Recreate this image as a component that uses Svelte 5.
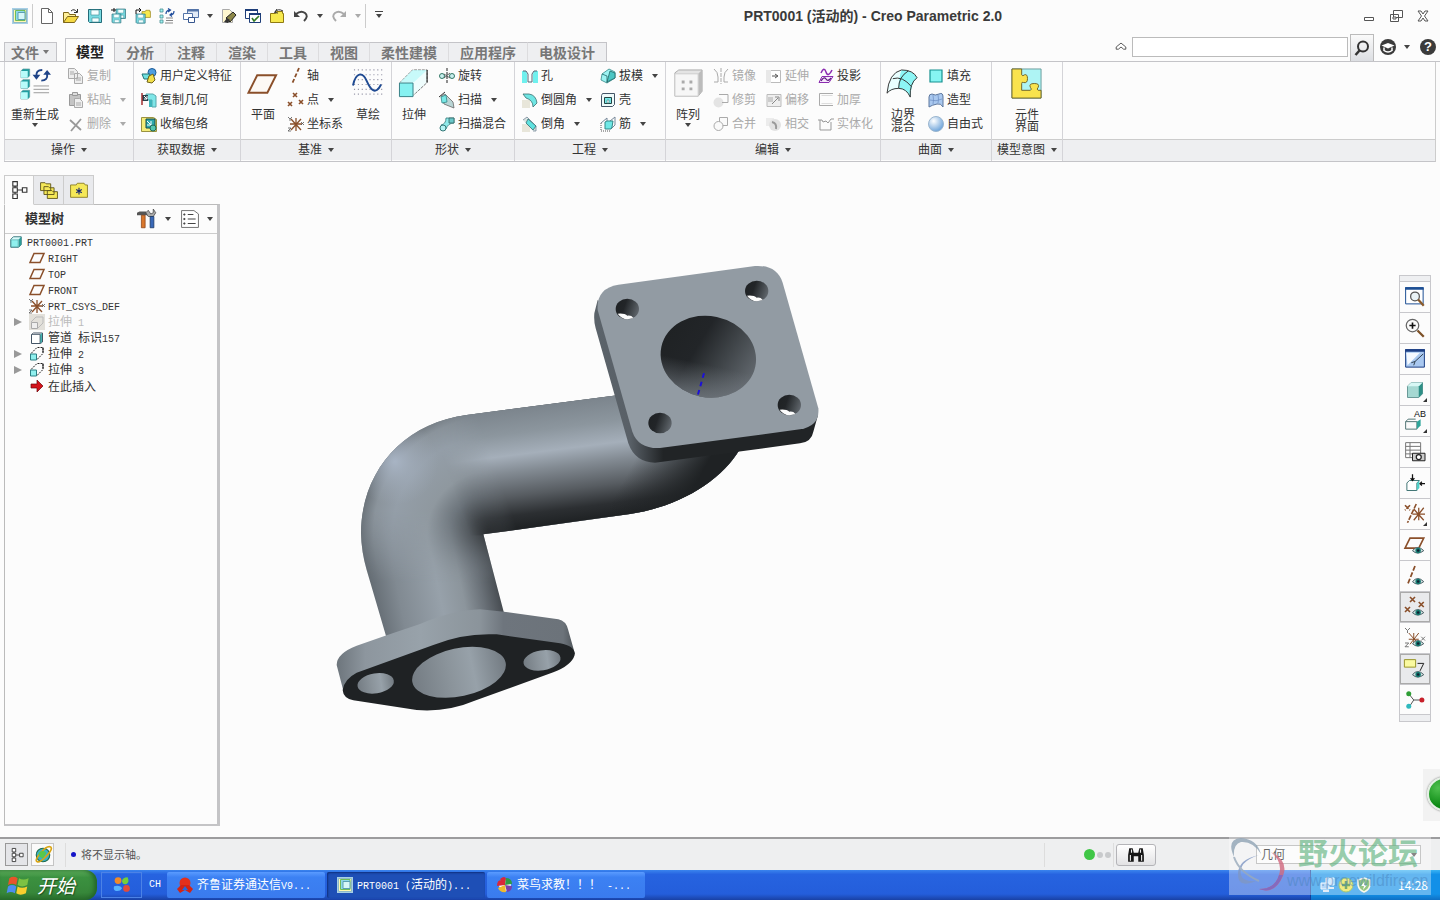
<script lang="ts">
  // Shared pieces of the icon drawings
  const eye = '<path d="M6 12.500q4-5 9 0q-5 4-9 0z" fill="#d8e6e6" stroke="#4b6066" stroke-width=".8"/><circle cx="10.500" cy="12.300" r="2.200" fill="#157a70"/><circle cx="10.500" cy="12.300" r="1" fill="#123"/>';
  const cube = '<path d="M2 5l3-3h9v9l-3 3H2z" fill="#d9fbfb" stroke="#2c6d74"/><path d="M11 5l3-3v9l-3 3z" fill="#2a9c98"/><path d="M2.500 5.500h8v8h-8z" fill="#8ff0ee" stroke="#3a8f92" stroke-width=".6"/>';
  const extrude = '<path d="M2 7.500L8 1.500h6v6L8 13.500" fill="none" stroke="#222" stroke-dasharray="2 1"/><path d="M14 1.500v5" stroke="#222"/><path d="M1.500 8h6v6h-6z" fill="#8ff0ee" stroke="#2c7f84"/>';
  const csys = '<path d="M8 2v13M2 8h12M3 3l10 11M13 3L3 14" stroke="#8a4f2a" stroke-width="1.300"/><path d="M0 1l2 2 2-2M2 3v2M0 12h3l-3 3h3M13 6l3 3M16 6l-3 3" stroke="#555" stroke-width=".8" fill="none"/>';
  const crosses = '<path d="M5 1l4 4M9 1L5 5M0 10l4 4M4 10l-4 4M11 8l4 4M15 8l-4 4" stroke="#8a4f2a" stroke-width="1.600"/>';
  const floppy = '<path d="M1.500 1.500h13v13h-12l-1-1z" fill="#79dbe2" stroke="#236b78"/><path d="M4 2h8v5H4zM5 10h7v4H5z" fill="#f4ffff" stroke="#3a8792" stroke-width=".6"/>';
  const folder = '<path d="M1.500 5.500h5l1-2h6v2h1v9h-13z" fill="#f7e94d" stroke="#8f7a12"/>';

  const icons: Record<string, string> = {
    app: '<path d="M0 0h16v16H0z" fill="#a7cfe6"/><path d="M1.500 1.500h13v13h-13z" fill="#fff8b0" stroke="#8fb9c6"/><path d="M3.500 2.500h9.500v10H3.500z" fill="#8ed8ea" stroke="#6fbb58"/><path d="M6 4.500h7v7H6z" fill="#d6f7f8" stroke="#5a9fb4"/>',
    file: '<path d="M2.500.5h7l4 4v11h-11z" fill="#fff" stroke="#666"/><path d="M9.500.5v4h4" fill="none" stroke="#666"/>',
    open: '<path d="M.5 14.500v-10h5l1 2h6v2" fill="#fff09a" stroke="#7e671b"/><path d="M.5 14.500l4-6h11l-4 6z" fill="#f5d944" stroke="#7e671b"/><path d="M8 3q3-3 6 1M14.500 1v3.500H11" fill="none" stroke="#333"/>',
    save: floppy,
    saveas: `<g transform="translate(4 0) scale(.72)">${floppy}</g><g transform="translate(0 5) scale(.68)">${floppy}</g><path d="M0 2h5M3 0v4" stroke="#111"/>`,
    savecopy: `<g transform="translate(6 0) scale(.65)">${folder}</g><g transform="translate(0 5) scale(.7)">${floppy}</g><path d="M1 6V2h4M4 0l2 2-2 2" stroke="#111" fill="none"/>`,
    regen: '<path d="M1 1h3v3H1zM1 7h3v3H1zM1 12h3v3H1z" fill="#9ef0ef" stroke="#4a9094" stroke-width=".8"/><path d="M7 10h7M7 12.500h7M6 15h8" stroke="#888"/><path d="M7 6q0-4 4-4M9 .5L11.500 2 9 4M15 3q0 4-4 4M13 5l-2 2 2 1.500" fill="none" stroke="#1f4c9c" stroke-width="1.200"/>',
    windows: '<path d="M4.500 1.500h11v8h-11z" fill="#e3ebf6" stroke="#5575a8"/><path d="M4 2.500h12" stroke="#5575a8" stroke-width="2"/><path d="M.5 5.500h9v6h-9z" fill="#fff" stroke="#5575a8"/><path d="M5.500 9.500h6v5h-6z" fill="#fff" stroke="#36568e"/>',
    erase: '<path d="M1.500 1.500h7l3 3v10h-10z" fill="#fff8d0" stroke="#aaa"/><path d="M5 10l7-6 3 3-6 7z" fill="#8c8748" stroke="#222"/><path d="M3 14l3-4 3 2-2 3z" fill="#333"/>',
    check: '<path d="M.5 1.500h12v9H.5z" fill="#fff" stroke="#1d3d78"/><path d="M0 2h13" stroke="#1d3d78" stroke-width="2"/><path d="M4.500 5.500h11v9h-11z" fill="#fff" stroke="#1d3d78"/><path d="M4 6h12" stroke="#1d3d78" stroke-width="2"/><path d="M7 10l2 3 5-5" fill="none" stroke="#317b22" stroke-width="1.600"/>',
    folderup: `${folder}<path d="M6 4q3-4 8-1M8 1L5.500 4.500 9 5" fill="none" stroke="#333"/>`,
    undo: '<path d="M3 6q5-4 9-1t-1 8" fill="none" stroke="#444" stroke-width="2"/><path d="M1 3v6h6z" fill="#444"/>',
    redo: '<path d="M13 6Q8 2 4 5t1 8" fill="none" stroke="#aaa" stroke-width="2"/><path d="M15 3v6H9z" fill="#aaa"/>',
    bigregen: '<path d="M2 3l2-2h7v7l-2 2H2zM2 14l2-2h7v7l-2 2H2zM2 25l2-2h7v7l-2 2H2z" fill="#1f9ea0" stroke="#5f9c9f" stroke-width=".7"/><path d="M2 3h7v7H2zM2 14h7v7H2zM2 25h7v7H2z" fill="#b8fbfa"/><path d="M15 18.500h16M15 22h16M15 25.500h16" stroke="#999"/><path d="M18 9q-1-7 6-7M29 6q1 7-6 7" fill="none" stroke="#1f4488" stroke-width="2"/><path d="M14 7h8l-4 5zM25 7h8l-4-5z" fill="#1f4488"/>',
    copy: '<path d="M.5.5h6l3 3v7h-9zM6.500 5.500h5l3 3v7h-8z" fill="#eee" stroke="#aaa"/><path d="M2 4h4M2 6h4M8 10h5M8 12h5" stroke="#aaa"/>',
    paste: '<path d="M1.500 2.500h11v11h-11z" fill="#c4c4c4" stroke="#999"/><path d="M4.500.5h5v3h-5z" fill="#ddd" stroke="#999"/><path d="M6.500 6.500h5l3 3v6h-8z" fill="#eee" stroke="#aaa"/><path d="M8 11h5M8 13h5" stroke="#aaa"/>',
    del: '<path d="M2 4l11 10M13 3L3 15" stroke="#999" stroke-width="1.800"/>',
    udf: '<circle cx="11" cy="4.500" r="4" fill="#4e9ee0" stroke="#1c5a96"/><path d="M1 6h8l-2 5H3z" fill="#6fe0df" stroke="#217377"/><path d="M8 8l4-2 2 6-3 3-5-1z" fill="#f2df4a" stroke="#6f641c"/>',
    copygeom: '<path d="M5 2h7l3 2v11h-4V8H5z" fill="#7ee6e8" stroke="#5aa7ab"/><path d="M1 3h6v6H1z" fill="#27424d"/><path d="M1 1v12" stroke="#a33030" stroke-width="1.500"/><path d="M8 8h3v7H8z" fill="#3fb6bb"/><path d="M3 4l3 3M6 4v3H3" stroke="#fff" fill="none"/>',
    shrink: '<path d="M.5 1.500h12l3 2v12H.5z" fill="#f4ec78" stroke="#9a9240"/><path d="M5 3h9v9H5z" fill="#2ea9ac" stroke="#14484c"/><path d="M6 5l4 4M10 5v4H6" stroke="#fff" fill="none"/><circle cx="12" cy="12" r="3" fill="#55c8b0" stroke="#20695c"/>',
    bigplane: '<path d="M10.500 7.500H30l-9 18H1.500z" fill="#fdf9f5" stroke="#8a4f2a" stroke-width="2"/>',
    plane: '<path d="M5 3.500h10l-4 9H1z" fill="none" stroke="#8a4f2a" stroke-width="1.500"/>',
    axis: '<path d="M11 0L4 16" stroke="#8a4f2a" stroke-width="1.800" stroke-dasharray="4 2"/>',
    point: crosses,
    csys,
    bigsketch: '<path d="M2 2h30M2 7h30M2 12h30M2 17h30M2 22h30M2 27h30" stroke="#99a" stroke-width="1.200" stroke-dasharray="1.200 2.800"/><path d="M1 18C4 4 11 4 15 13s9 16 15 4" fill="none" stroke="#1f4a92" stroke-width="2"/>',
    bigextrude: '<path d="M2 15L15 2h15v13L16 28" fill="#effdfd" stroke="#777" stroke-dasharray="3 1"/><path d="M15 2h15L16 15H2z" fill="#b8f8f8" opacity=".7"/><path d="M30 2v13" stroke="#111"/><path d="M1.500 15.500h14v14h-14z" fill="#86f1f1" stroke="#377f84"/>',
    revolve: '<path d="M8 0v16" stroke="#222" stroke-dasharray="3 1"/><circle cx="3" cy="8" r="2.500" fill="#c9efef" stroke="#376"/><circle cx="13" cy="8" r="2.500" fill="#c9efef" stroke="#376"/><path d="M5 6l6 4M11 5l-6 5" stroke="#444" stroke-width=".8"/>',
    sweep: '<path d="M2 4l4-2 8 8 1 6-10-4z" fill="#b9d5d5" stroke="#666" stroke-width=".8"/><path d="M2 5l5-2 1 7-5 1z" fill="#79e8e6" stroke="#388" stroke-width=".8"/><path d="M0 5l6-5" stroke="#333"/>',
    blend: '<path d="M2 9q5-1 5-7h8v5q-6 0-8 6z" fill="#8feaea" stroke="#377" stroke-width=".8"/><circle cx="4" cy="12" r="3" fill="#b5f4f4" stroke="#377"/><path d="M10 2h5v5h-5z" fill="#6ac8ca" stroke="#366" stroke-width=".8"/>',
    hole: '<path d="M0 3h4l1 3v9H0zM16 3h-4l-1 3v9h5z" fill="#6ff0ee"/><path d="M1 3h3l2 3v8h4V6l2-3h3" fill="none" stroke="#567"/>',
    round: '<path d="M0 8h8v8H0z" fill="#e8e6da"/><path d="M1 2h6q7 1 8 9l-4 4q0-7-7-9z" fill="#6fe6e4" stroke="#386e70" stroke-width=".8"/>',
    chamfer: '<path d="M0 8h8v8H0z" fill="#e8e6da"/><path d="M1 4l4-3 9 9v5h-3" fill="#d9e4e2" stroke="#789" stroke-width=".8"/><path d="M6 3l8 7-3 4-7-7z" fill="#5fe2e0" stroke="#386e70" stroke-width=".8"/>',
    draft: '<path d="M2 6l7-5 6 3v6l-8 5-6-3z" fill="#9df3f2" stroke="#388" stroke-width=".8"/><path d="M7 14l3-11 5 2v5z" fill="#4cc6c4" stroke="#266" stroke-width=".8"/><path d="M2 6l5 2v7" fill="none" stroke="#266" stroke-width=".8"/>',
    shell: '<path d="M1.500 3.500l1-2h12v11l-2 2h-11z" fill="#eefafa" stroke="#456"/><path d="M4.500 5.500h7v6h-7z" fill="#78e8e8" stroke="#244"/><path d="M7 8h2v3H7z" fill="#fff" stroke="#377" stroke-width=".6"/>',
    rib: '<path d="M1 7l6-5v3M10 5l5-4v8l-4 4" fill="none" stroke="#789"/><path d="M5 6l2-1h6l-1 6-1 2H5z" fill="#6fe8e6" stroke="#388"/><path d="M1 7v8h10" fill="none" stroke="#555" stroke-dasharray="1 1"/>',
    bigpattern: '<path d="M3 5l4-3h24v22l-4 5H3z" fill="#e4e4e4" stroke="#aaa"/><path d="M27 6l4-4v22l-4 5z" fill="#bcbcbc"/><path d="M3 6h24v23H3z" fill="#f6f6f6" stroke="#ccc"/><path d="M10 13h3v3h-3zM18 13h3v3h-3zM10 20h3v3h-3zM18 20h3v3h-3z" fill="#aaa"/>',
    mirror: '<path d="M8 0v16" stroke="#aaa" stroke-dasharray="4 1"/><path d="M1 1q4 3 4 8v5H1M15 1q-4 3-4 8v5h4" fill="none" stroke="#aaa"/>',
    trim: '<circle cx="5.500" cy="10.500" r="5" fill="#e4e4e4"/><path d="M6 2.500h9v8H9" fill="none" stroke="#aaa"/>',
    merge: '<path d="M6.500 1.500h8v8h-8z" fill="#fafafa" stroke="#aaa"/><circle cx="5.500" cy="10" r="4.500" fill="#fafafa" stroke="#aaa"/>',
    extend: '<path d="M0 2h5v13H0z" fill="#e8e8e8"/><path d="M5 2.500h9.500v12H5" fill="#fff" stroke="#bbb"/><path d="M6 8h5M9 6l3 2-3 2" stroke="#555" fill="none"/>',
    offset: '<path d="M1 2.500h14v12H1z" fill="#eee" stroke="#bbb"/><path d="M2 5h5v5H2z" fill="#ccc"/><path d="M6 12l6-6M9 5h4v4" fill="none" stroke="#888"/>',
    intersect: '<path d="M0 2h8v8H0z" fill="#ececec"/><circle cx="9" cy="9" r="6" fill="#e2e2e2"/><path d="M6 6q5 1 4 7" fill="none" stroke="#999" stroke-width="2"/>',
    project: '<path d="M3 5q3-7 5-1t6-2" fill="none" stroke="#8b2bb0" stroke-width="1.500"/><path d="M4 8.500h11l-4 6H1z" fill="#f6e8fb" stroke="#8b2bb0"/><path d="M3 13q3-5 5-2t5-1" fill="none" stroke="#601c80" stroke-width="1.300"/>',
    thicken: '<path d="M15 1.500H1.500v12H15" fill="none" stroke="#aaa"/><path d="M3.500 3.500h11M3.500 11.500h11" stroke="#ddd"/>',
    solidify: '<path d="M0 4h4l1 2 3-1 2 2 3-4h3M2 4v10h11V6" fill="none" stroke="#999"/>',
    bigboundary: '<path d="M0 26Q2 5 15 2q12 0 16 8-8 6-7 20-6-8-12-8-8 0-12 4z" fill="#e9ffff"/><path d="M15 2q12 0 16 8-6 5-7 20-4-9-12-9 0-11 3-19z" fill="#8df5f5"/><path d="M0 26Q2 5 15 2q12 0 16 8-8 6-7 20-4-9-12-9T0 26zM22 3q-10 6-10 18M6 11q10-3 19 8" fill="none" stroke="#333"/>',
    fill: '<path d="M2 2h12v12H2z" fill="#86f4f2" stroke="#15908f" stroke-width="1.200"/>',
    style: '<path d="M1 5q0-3 3-3 3 2 7 0 4-2 4 3v10q-2-4-6-3-5 1-8 3z" fill="#a9c8ef" stroke="#5c769d"/><path d="M5 3q1 5 0 9M10 3q1 4 0 8M2 8q6 2 12-1" fill="none" stroke="#6a8bc0" stroke-width=".7"/>',
    bigintent: '<path d="M1 1h30v30H1z" fill="#aef4f4" stroke="#6a9c9c"/><path d="M1 1h10v6q1 2 3 0 3-1 3 4t-4 4q-2-1-2 1v7h9q2-1 0-3-2-4 4-4t4 4q-2 2 0 3h3v8H1z" fill="#f9e34d" stroke="#6f6426"/>',
    treetab: '<path d="M2.500.5h4v4h-4zM2.500 6h4v4h-4zM2.500 11.500h4v4h-4zM11 6h4v4h-4z" fill="#fff" stroke="#333"/><path d="M4.500 4.500V6M4.500 10v1.500M6.500 8H11" stroke="#333"/>',
    folders: '<path d="M.5 1.500h4l1 1h4v6h-9zM3.500 5h4l1 1h4v6h-9zM6.500 8.500h4l1 1h4v6h-9z" fill="#f5e858" stroke="#5f551a" stroke-width=".8"/>',
    favfolder: '<path d="M.5 3.500h5l1-1.500h6l1 1.500h2v11H.5z" fill="#f5e858" stroke="#8a7d22" stroke-width=".8"/><path d="M8 6v6M5.500 7.500l5 3M10.500 7.500l-5 3" stroke="#1a2870"/>',
    part: cube,
    hammer: '<path d="M0 3l2-1h5l2 2v1H0z" fill="#555"/><path d="M3.500 5h3v10h-3z" fill="#d9772c" stroke="#8a4114" stroke-width=".6"/><path d="M9 1l2 3 2-1V0l2 3-2 3H9L7 3z" fill="#aaa" stroke="#444" stroke-width=".6"/><path d="M10.500 6h3v9h-3z" fill="#3a69b8" stroke="#1a3560" stroke-width=".6"/>',
    treelist: '<path d="M.5.5h11l4 3v12H.5z" fill="#fff" stroke="#666" stroke-width=".8"/><path d="M6 4h5M6 8h7M6 12h7" stroke="#444"/><path d="M2.500 3.500h1v1h-1zM2.500 7.500h1v1h-1zM2.500 11.500h1v1h-1z" fill="#444" stroke="#444" stroke-width=".8"/>',
    extrude,
    greyextrude: '<path d="M0 0h16v16H0z" fill="#e2e0da"/><path d="M2 8l5-5h7v6l-5 5" fill="none" stroke="#bbb"/><path d="M2.500 8.500h6v6h-6z" fill="#eee" stroke="#aaa"/>',
    pipe: '<path d="M2.500 4.500l2-1.500h9v9l-2 1.500h-9z" fill="#fff" stroke="#456"/><path d="M11 4.500l2-1.500v9l-2 1.500z" fill="#43b3b1"/><path d="M2.500 4.500h8.500v9" fill="none" stroke="#456" stroke-width=".8"/>',
    insert: '<path d="M2 6h6V2l6 6-6 6v-4H2z" fill="#d3121a" stroke="#6b0508" stroke-width=".7"/>',
    refit: '<path d="M.5.5h14v13H.5z" fill="#fff" stroke="#1d4f94" stroke-width=".8"/><path d="M0 1.200h15" stroke="#1d4f94" stroke-width="2"/><circle cx="8" cy="7.500" r="3.500" fill="#eaf3f6" stroke="#555"/><path d="M10.500 10l4.500 5" stroke="#8a5a2a" stroke-width="1.800"/>',
    zoomin: '<circle cx="6" cy="6" r="5" fill="#fafafa" stroke="#666"/><path d="M3.500 6h5M6 3.500v5" stroke="#111" stroke-width="1.300"/><path d="M10 10l5 5" stroke="#7d5127" stroke-width="1.800"/>',
    repaint: '<path d="M.5.5h15v14H.5z" fill="#a9c8f0" stroke="#1d3f84" stroke-width=".8"/><path d="M1 3h11L2 13z" fill="#f4f9ff"/><path d="M0 1.200h16" stroke="#1d3f84" stroke-width="2"/><path d="M14.500 4L8 10l-3 1M8 10l-1 3" fill="none" stroke="#345" stroke-width=".8"/>',
    shaded: '<path d="M2 5l3-3h9v9l-3 3H2z" fill="#a5d8d2" stroke="#6a9a98" stroke-width=".8"/><path d="M11 5l3-3v9l-3 3z" fill="#2e8f86"/><path d="M2 5l3-3h9l-3 3z" fill="#d8f8f5"/>',
    views: '<path d="M.5 8.500l2-2h6M.5 8.500h9v6h-9z" fill="#fafafa" stroke="#577" stroke-width=".8"/><path d="M9.500 8.500l3-2v5l-3 3z" fill="#2ea59a"/>',
    layers: '<path d="M.5.5h12v12H.5zM.5 3.500h12M.5 6.500h12M.5 9.500h12M4 .5v12" fill="#fff" stroke="#777" stroke-width=".8"/><path d="M6 9h10v6H6z" fill="#ccc" stroke="#222" stroke-width=".8"/><circle cx="11" cy="12" r="2" fill="#fff" stroke="#222"/>',
    persp: '<path d="M1.500 8l2-2h8l-2 2v6h-8z" fill="#fff" stroke="#477" stroke-width=".8"/><path d="M9.500 8l2-2v6l-2 2z" fill="#4fd0c8"/><path d="M6 1v4M4.500 4L6 6l1.500-2M16 8.500h-4M13.500 7L12 8.500l1.500 1.500" stroke="#111" fill="none"/>',
    datums: '<path d="M0 1l4 4M4 1L0 5M9 0L2 15" stroke="#8a4f2a" stroke-width="1.300" stroke-dasharray="4 1"/><path d="M6 8h10M11 3v10M7 4l8 9M15 3L7 13" stroke="#8a4f2a"/>',
    planeeye: `<path d="M4 2.500h11l-4 8H0z" fill="none" stroke="#8a4f2a" stroke-width="1.300"/>${eye}`,
    axiseye: `<path d="M8 0L2 15" stroke="#8a4f2a" stroke-width="1.400" stroke-dasharray="4 1.500"/>${eye}`,
    pointeye: `<path d="M4 0l4 4M8 0L4 4M0 8l4 4M4 8l-4 4M11 4l4 4M15 4l-4 4" stroke="#8a4f2a" stroke-width="1.300"/>${eye}`,
    csyseye: `<path d="M7 4v9M3 9h8M3 4l8 9M11 4l-7 9" stroke="#8a4f2a" stroke-width=".8"/><path d="M0 0l2 2 2-2M2 2v2M0 12h3l-3 3h3M13 7l3 3M16 7l-3 3" stroke="#777" stroke-width=".8" fill="none"/>${eye}`,
    annoteye: `<path d="M-.5.5h9v6h-9z" fill="#fafaa0" stroke="#9a962c" stroke-width=".8"/><path d="M10 3.500h5l-3 6" fill="none" stroke="#222" stroke-width=".8"/>${eye}`,
    spin: '<path d="M7 8L3 3M7 8h7M7 8l-4 6" stroke="#555" stroke-width=".8"/><circle cx="3" cy="3" r="2" fill="#2f9e36"/><circle cx="13.500" cy="8" r="2" fill="#c8202a"/><circle cx="3" cy="13" r="2" fill="#30b9bd"/>',
    browser: '<circle cx="8" cy="8" r="6" fill="#3bb0c8" stroke="#1d6a49"/><path d="M3 14q-3-1 3-8t9-5q2 2-4 8T3 14z" fill="none" stroke="#d9a516" stroke-width="1.500"/><path d="M4 6q4-3 7 0l-3 5q-4-1-4-5z" fill="#57c84c"/>',
    binoc: '<path d="M2 2h3l1 4h4l1-4h3l1 6v6h-5V9H6v5H1V8z" fill="#161616"/><path d="M3 8v5M13 8v5M4 3v3M12 3v3" stroke="#eee"/>',
    min: '<path d="M3.500 9.500h9v3h-9z" fill="#fff" stroke="#555"/>',
    restore: '<path d="M5.500 2.500h9v7h-9zM2.500 6.500h8v7h-8z" fill="#fff" stroke="#555"/><path d="M5 9h3v2H5z" fill="#fff" stroke="#555"/>',
    close: '<path d="M3 3h3l2 3 2-3h3l-3.500 5 3.500 5h-3l-2-3-2 3H3l3.500-5z" fill="#fff" stroke="#555"/>',
    collapse: '<path d="M2.500 8L8 3.500 13.500 8v2.500H11L8 8l-3 2.500H2.500z" fill="#fff" stroke="#444"/>',
    search: '<circle cx="9" cy="6.500" r="5" fill="none" stroke="#333" stroke-width="2"/><path d="M5.500 10.500L1.500 15" stroke="#333" stroke-width="2.500"/>',
    learn: '<circle cx="8" cy="8" r="8" fill="#3b3b3b"/><path d="M1.500 6.500L8 4l6.500 2.500L8 9.500z" fill="#fff"/><path d="M4 8.500v3q4 3 8 0v-3" fill="none" stroke="#fff" stroke-width="1.500"/>',
    start: '<path d="M1 3q3-2 6 0L6 8Q3 6 0 8z" fill="#e8542a"/><path d="M8 3q3 2 7 0l-1 5q-4 2-7 0z" fill="#7cc243"/><path d="M0 9q3-2 6 0l-1 5q-3-2-6 0z" fill="#4d8df0"/><path d="M7 9q3 2 7 0l-1 5q-4 2-7 0z" fill="#f8cf2e"/>',
    sogou: '<circle cx="4.500" cy="4" r="3" fill="#f08a2a"/><path d="M8 5q0-4 5-4 2 4-1 6-3 1-4-2z" fill="#74cf39"/><path d="M1 9q6-1 7 2-2 3-6 2-2-1-1-4z" fill="#57b3ff"/><circle cx="12" cy="11" r="3" fill="#e24b3b"/>',
    stock: '<circle cx="8" cy="6" r="5.500" fill="#e3301c"/><path d="M0 12l4-4h8l4 4-3 4-5-3-5 3z" fill="#d32414"/><path d="M5 13l3-4 3 4z" fill="#2a66d8"/>',
    pinwheel: '<circle cx="8" cy="8" r="6" fill="#fff"/><path d="M8 8L3 2q5-4 6 0zM8 8l-8 1q0-6 4-6z" fill="#d9283a"/><path d="M8 8l1-7q6 0 6 6z" fill="#2e9b45"/><path d="M8 8l7 1q0 5-5 6z" fill="#7c3fa8"/><path d="M8 8l1 7q-6 1-8-4z" fill="#efb92c"/>',
    net: '<path d="M6 1h8v7H6z" fill="#bfe0ff" stroke="#e8f4ff"/><path d="M1 6h8v6H1z" fill="#8fc3f4" stroke="#e8f4ff"/><path d="M3 14h6M8 11h6" stroke="#d4e4f4" stroke-width="2"/>',
    safe: '<circle cx="8" cy="8" r="7" fill="#e9df3c" stroke="#69a830"/><path d="M8 4v8M4 8h8" stroke="#2f7d22" stroke-width="2.500"/>',
    shield: '<path d="M8 1l6 2v5q-1 5-6 7-5-2-6-7V3z" fill="#5fa83e" stroke="#f4f4e0" stroke-width="1.500"/><path d="M9 4L5 9h3l-1 4 4-5H8z" fill="#fff"/>'
  };

  type Cmd = { icon: string; label: string; off?: boolean; menu?: boolean };
  type Part = { w: number; big?: Cmd; rows?: Cmd[] };

  const quick = ['file', 'open', 'save', 'saveas', 'savecopy', 'regen', 'windows', '|v', 'erase', 'check', 'folderup', 'undo', '|v', 'redo', '|d'];
  const tabs = ['模型', '分析', '注释', '渲染', '工具', '视图', '柔性建模', '应用程序', '电极设计'];

  const groups: { name: string; parts: Part[] }[] = [
    { name: '操作', parts: [
      { w: 52, big: { icon: 'bigregen', label: '重新生成', menu: true } },
      { w: 64, rows: [
        { icon: 'copy', label: '复制', off: true },
        { icon: 'paste', label: '粘贴', off: true, menu: true },
        { icon: 'del', label: '删除', off: true, menu: true }
      ] }
    ] },
    { name: '获取数据', parts: [
      { w: 98, rows: [
        { icon: 'udf', label: '用户定义特征' },
        { icon: 'copygeom', label: '复制几何' },
        { icon: 'shrink', label: '收缩包络' }
      ] }
    ] },
    { name: '基准', parts: [
      { w: 36, big: { icon: 'bigplane', label: '平面' } },
      { w: 60, rows: [
        { icon: 'axis', label: '轴' },
        { icon: 'point', label: '点', menu: true },
        { icon: 'csys', label: '坐标系' }
      ] },
      { w: 38, big: { icon: 'bigsketch', label: '草绘' } }
    ] },
    { name: '形状', parts: [
      { w: 36, big: { icon: 'bigextrude', label: '拉伸' } },
      { w: 74, rows: [
        { icon: 'revolve', label: '旋转' },
        { icon: 'sweep', label: '扫描', menu: true },
        { icon: 'blend', label: '扫描混合' }
      ] }
    ] },
    { name: '工程', parts: [
      { w: 74, rows: [
        { icon: 'hole', label: '孔' },
        { icon: 'round', label: '倒圆角', menu: true },
        { icon: 'chamfer', label: '倒角', menu: true }
      ] },
      { w: 64, rows: [
        { icon: 'draft', label: '拔模', menu: true },
        { icon: 'shell', label: '壳' },
        { icon: 'rib', label: '筋', menu: true }
      ] }
    ] },
    { name: '编辑', parts: [
      { w: 36, big: { icon: 'bigpattern', label: '阵列', menu: true } },
      { w: 49, rows: [
        { icon: 'mirror', label: '镜像', off: true },
        { icon: 'trim', label: '修剪', off: true },
        { icon: 'merge', label: '合并', off: true }
      ] },
      { w: 48, rows: [
        { icon: 'extend', label: '延伸', off: true },
        { icon: 'offset', label: '偏移', off: true },
        { icon: 'intersect', label: '相交', off: true }
      ] },
      { w: 61, rows: [
        { icon: 'project', label: '投影' },
        { icon: 'thicken', label: '加厚', off: true },
        { icon: 'solidify', label: '实体化', off: true }
      ] }
    ] },
    { name: '曲面', parts: [
      { w: 36, big: { icon: 'bigboundary', label: '边界混合' } },
      { w: 62, rows: [
        { icon: 'fill', label: '填充' },
        { icon: 'style', label: '造型' },
        { icon: 'freestyle', label: '自由式' }
      ] }
    ] },
    { name: '模型意图', parts: [
      { w: 62, big: { icon: 'bigintent', label: '元件界面' } }
    ] }
  ];

  const tree = [
    { icon: 'plane', label: 'RIGHT' },
    { icon: 'plane', label: 'TOP' },
    { icon: 'plane', label: 'FRONT' },
    { icon: 'csys', label: 'PRT_CSYS_DEF' },
    { icon: 'greyextrude', label: '拉伸 1', open: true, off: true },
    { icon: 'pipe', label: '管道 标识157' },
    { icon: 'extrude', label: '拉伸 2', open: true },
    { icon: 'extrude', label: '拉伸 3', open: true },
    { icon: 'insert', label: '在此插入' }
  ];

  const viewTools = ['refit', 'zoomin', 'repaint', 'shaded', 'views', 'layers', 'persp', 'datums', 'planeeye', 'axiseye', 'pointeye', 'csyseye', 'annoteye', 'spin'];
  const corners = ['shaded', 'views', 'datums'];
  let pressed = $state(['pointeye', 'annoteye']);

  const tasks = [
    { icon: 'stock', label: '齐鲁证券通达信V9...' },
    { icon: 'app', label: 'PRT0001 (活动的)...' },
    { icon: 'pinwheel', label: '菜鸟求教！！！ -...' }
  ];

  let activeTab = $state('模型');
  let activeTask = $state(1);
  let query = $state('');
  let filter = $state('几何');

  function toggle(name: string) {
    pressed = pressed.includes(name) ? pressed.filter((n) => n !== name) : [...pressed, name];
  }

  // Runs of ASCII are set in the half-width face
  function split(text: string) {
    return text.split(/([\x20-\x7e]+)/).filter((s) => s);
  }
</script>

{#snippet icon(name: string, size = 16)}
  {#if name === 'freestyle'}
    <svg class="icon" width={size} height={size} viewBox="0 0 16 16" aria-hidden="true">
      <defs>
        <radialGradient id="ball" cx=".35" cy=".3" r=".8">
          <stop offset="0" stop-color="#fff" />
          <stop offset="1" stop-color="#5e9ad6" />
        </radialGradient>
      </defs>
      <circle cx="8" cy="8" r="7.500" fill="url(#ball)" stroke="#9bb6cf" />
    </svg>
  {:else}
    <svg class="icon" width={size} height={size} viewBox={name.startsWith('big') ? '0 0 33 33' : '0 0 16 16'} aria-hidden="true">{@html icons[name]}</svg>
  {/if}
{/snippet}

{#snippet mixed(text: string)}
  {#each split(text) as part}<span class:half={part.charCodeAt(0) < 127}>{part}</span>{/each}
{/snippet}

<div class="app">
  <header class="titlebar">
    <div class="quick">
      <button class="logo" aria-label="Creo">{@render icon('app')}</button>
      {#each quick as q}
        {#if q.startsWith('|')}
          <button class="drop" class:off={q === '|d'} aria-label="更多"><i class="arrow"></i></button>
        {:else}
          <button class="tool" aria-label={q}>{@render icon(q)}</button>
        {/if}
      {/each}
      <button class="drop custom" aria-label="自定义"><i class="arrow"></i></button>
    </div>
    <h1>PRT0001 (活动的) - Creo Parametric 2.0</h1>
    <div class="controls">
      <button aria-label="最小化">{@render icon('min')}</button>
      <button aria-label="还原">{@render icon('restore')}</button>
      <button aria-label="关闭">{@render icon('close')}</button>
    </div>
  </header>

  <nav class="tabrow">
    <button class="file-tab">文件<i class="arrow"></i></button>
    <div class="tabs">
      {#each tabs as tab}
        <button class="tab" class:active={activeTab === tab} onclick={() => (activeTab = tab)}>{tab}</button>
      {/each}
    </div>
    <div class="finder">
      <button class="plain" aria-label="折叠功能区">{@render icon('collapse', 14)}</button>
      <input type="text" aria-label="搜索命令" bind:value={query} />
      <button class="go" aria-label="搜索">{@render icon('search')}</button>
      <button class="plain learn" aria-label="学习">{@render icon('learn')}<i class="arrow"></i></button>
      <button class="help" aria-label="帮助">?</button>
    </div>
  </nav>

  <section class="ribbon">
    {#each groups as group}
      <div class="group">
        <div class="group-body">
          {#each group.parts as part}
            <div class="part" style:width="{part.w}px">
              {#if part.big}
                <button class="big">
                  {@render icon(part.big.icon, 32)}
                  <span class:two={group.name === '曲面' || group.name === '模型意图'}>{part.big.label}</span>
                  {#if part.big.menu}<i class="arrow"></i>{/if}
                </button>
              {:else}
                {#each part.rows ?? [] as cmd}
                  <button class="cmd" class:off={cmd.off} disabled={cmd.off}>
                    {@render icon(cmd.icon)}
                    <span>{cmd.label}</span>
                    {#if cmd.menu}<i class="arrow"></i>{/if}
                  </button>
                {/each}
              {/if}
            </div>
          {/each}
        </div>
        <button class="group-name">{group.name}<i class="arrow"></i></button>
      </div>
    {/each}
    <div class="group rest">
      <div class="group-body"></div>
      <div class="group-name"></div>
    </div>
  </section>

  <main class="work">
    <aside class="side">
      <div class="side-tabs">
        <button class="active" aria-label="模型树">{@render icon('treetab', 18)}</button>
        <button aria-label="文件夹浏览器">{@render icon('folders', 18)}</button>
        <button aria-label="收藏夹">{@render icon('favfolder', 18)}</button>
      </div>
      <div class="panel">
        <div class="panel-head">
          <h2>模型树</h2>
          <button aria-label="设置">{@render icon('hammer', 20)}<i class="arrow"></i></button>
          <button aria-label="显示">{@render icon('treelist', 18)}<i class="arrow"></i></button>
        </div>
        <ul class="tree">
          <li class="root">{@render icon('part', 14)}<span class="name">{@render mixed('PRT0001.PRT')}</span></li>
          {#each tree as node}
            <li class:off={node.off}>
              <i class="expander" class:shown={node.open}></i>
              {@render icon(node.icon)}
              <span class="name">{@render mixed(node.label)}</span>
            </li>
          {/each}
        </ul>
      </div>
    </aside>

    <div class="canvas">
      <svg class="model" viewBox="0 0 1560 1440" role="img" aria-label="弯管零件">
        <defs>
          <linearGradient id="across" gradientUnits="userSpaceOnUse" x1="680" y1="465" x2="725" y2="822">
            <stop offset="0" stop-color="#7c858d" />
            <stop offset=".2" stop-color="#8c969e" />
            <stop offset=".38" stop-color="#a5afba" />
            <stop offset=".52" stop-color="#838b93" />
            <stop offset=".72" stop-color="#575c61" />
            <stop offset=".88" stop-color="#2c2f32" />
            <stop offset="1" stop-color="#1e2123" />
          </linearGradient>
          <linearGradient id="down" gradientUnits="userSpaceOnUse" x1="160" y1="1040" x2="530" y2="965">
            <stop offset="0" stop-color="#656d74" />
            <stop offset=".2" stop-color="#818a92" />
            <stop offset=".52" stop-color="#97a1aa" />
            <stop offset=".7" stop-color="#8c959c" />
            <stop offset=".85" stop-color="#6a7178" />
            <stop offset="1" stop-color="#44494e" />
          </linearGradient>
          <radialGradient id="bend" gradientUnits="userSpaceOnUse" cx="505" cy="850" r="383">
            <stop offset="0" stop-color="#2a2d30" />
            <stop offset=".12" stop-color="#43484c" />
            <stop offset=".3" stop-color="#6c747b" />
            <stop offset=".48" stop-color="#8f989f" />
            <stop offset=".75" stop-color="#949ea8" />
            <stop offset=".9" stop-color="#8b949c" />
            <stop offset="1" stop-color="#6c747b" />
          </radialGradient>
          <radialGradient id="shine" gradientUnits="userSpaceOnUse" cx="225" cy="635" r="130">
            <stop offset="0" stop-color="#a8b4c4" />
            <stop offset="1" stop-color="#a0abb8" stop-opacity="0" />
          </radialGradient>
          <linearGradient id="fadeY" gradientUnits="userSpaceOnUse" x1="0" y1="780" x2="0" y2="1000">
            <stop offset="0" stop-color="#fff" />
            <stop offset="1" stop-color="#000" />
          </linearGradient>
          <linearGradient id="fadeX" gradientUnits="userSpaceOnUse" x1="455" y1="865" x2="585" y2="818">
            <stop offset="0" stop-color="#000" />
            <stop offset="1" stop-color="#fff" />
          </linearGradient>
          <mask id="maskY" maskUnits="userSpaceOnUse" x="0" y="0" width="1560" height="1440"><rect width="1560" height="1440" fill="url(#fadeY)" /></mask>
          <mask id="maskX" maskUnits="userSpaceOnUse" x="0" y="0" width="1560" height="1440"><rect width="1560" height="856" fill="url(#fadeX)" /></mask>
          <linearGradient id="shade" gradientUnits="userSpaceOnUse" x1="950" y1="620" x2="1120" y2="715">
            <stop offset="0" stop-color="#1f2224" stop-opacity="0" />
            <stop offset="1" stop-color="#1f2224" />
          </linearGradient>
          <linearGradient id="rim" gradientUnits="userSpaceOnUse" x1="830" y1="0" x2="1030" y2="0">
            <stop offset="0" stop-color="#5b636a" />
            <stop offset=".5" stop-color="#596067" />
            <stop offset="1" stop-color="#212426" />
          </linearGradient>
          <linearGradient id="bore" x1="0" y1=".35" x2="1" y2=".65">
            <stop offset="0" stop-color="#1f2224" />
            <stop offset=".35" stop-color="#222528" />
            <stop offset=".65" stop-color="#3f4448" />
            <stop offset="1" stop-color="#62686e" />
          </linearGradient>
          <linearGradient id="glow" x1="0" y1="0" x2="0" y2="1">
            <stop offset=".6" stop-color="#777e85" stop-opacity="0" />
            <stop offset="1" stop-color="#777e85" stop-opacity=".7" />
          </linearGradient>
          <linearGradient id="edge" gradientUnits="userSpaceOnUse" x1="50" y1="0" x2="765" y2="0">
            <stop offset="0" stop-color="#6d757c" />
            <stop offset=".12" stop-color="#8d969e" />
            <stop offset=".35" stop-color="#98a2aa" />
            <stop offset=".6" stop-color="#8b949b" />
            <stop offset=".7" stop-color="#6e757d" />
            <stop offset=".95" stop-color="#6c737a" />
            <stop offset="1" stop-color="#4c5257" />
          </linearGradient>
          <linearGradient id="inner" x1="0" y1="0" x2="1" y2="0">
            <stop offset="0" stop-color="#747c83" />
            <stop offset=".4" stop-color="#8b949b" />
            <stop offset=".65" stop-color="#97a1a9" />
            <stop offset="1" stop-color="#737b82" />
          </linearGradient>
          <path id="pipe" d="M950 428L440 495C245 520 123 670 123 850Q124 905 140 960L200 1165H572L490 853L930 792C1080 770 1205 690 1258 600L1150 480Z" />
        </defs>
        <use href="#pipe" fill="url(#down)" />
        <use href="#pipe" fill="url(#bend)" mask="url(#maskY)" />
        <use href="#pipe" fill="url(#shine)" />
        <use href="#pipe" fill="url(#across)" mask="url(#maskX)" />
        <use href="#pipe" fill="url(#shade)" />

        <path fill="url(#rim)" d="M833 150L823 190Q821 215 827 235L925 580Q945 637 1005 638L1440 580Q1475 575 1480 545L1494 495L1400 400L900 200Z" />
        <path fill="#929ba3" d="M895 104L1305 48Q1370 44 1388 98L1495 475Q1500 528 1440 538L1020 594Q955 597 937 545L833 180Q828 115 895 104Z" />
        <g transform="rotate(12 1165 320)">
          <ellipse cx="1165" cy="320" rx="144" ry="122" fill="url(#bore)" />
          <ellipse cx="1165" cy="320" rx="144" ry="122" fill="url(#glow)" />
        </g>
        <path d="M1152 370L1132 440" stroke="#1c10d8" stroke-width="6" stroke-dasharray="14 12" />
        {#each [[922, 177], [1310, 123], [1408, 465], [1020, 519]] as [cx, cy], i}
          <ellipse {cx} {cy} rx="35" ry="31" fill="url(#bore)" />
          {#if i < 3}
            <path fill="#fcfcfc" transform="translate({cx} {cy})" d="M-29 14Q-8 12 0 20Q12 18 18 27Q-12 38-29 14Z" />
          {/if}
        {/each}

        <path fill="url(#edge)" d="M50 1245Q50 1210 110 1187L200 1156L300 1122Q400 1080 480 1078L552 1085L715 1108Q738 1113 744 1138L765 1212L600 1240L72 1330Z" />
        <path fill="#1f2224" d="M68 1320Q72 1288 110 1268L340 1185Q430 1148 530 1153L720 1180Q766 1188 764 1215Q755 1246 700 1267L470 1350Q380 1388 290 1380L100 1351Q70 1345 68 1320Z" />
        <ellipse cx="417" cy="1267" rx="143" ry="72" transform="rotate(-12 417 1267)" fill="url(#inner)" />
        <ellipse cx="167" cy="1300" rx="55" ry="30" transform="rotate(-9 167 1300)" fill="url(#inner)" />
        <ellipse cx="666" cy="1231" rx="56" ry="30" transform="rotate(-9 666 1231)" fill="url(#inner)" />
      </svg>
      <div class="orb"><i></i></div>
    </div>

    <div class="view-tools">
      {#each viewTools as name}
        <button class:pressed={pressed.includes(name)} class:corner={corners.includes(name)} aria-label={name} onclick={() => toggle(name)}>
          {@render icon(name, 20)}
          {#if name === 'views'}<b>AB</b>{/if}
        </button>
      {/each}
    </div>
  </main>

  <footer class="status">
    <button class="square down" aria-label="导航器">{@render icon('treetab', 14)}</button>
    <button class="square" aria-label="浏览器">{@render icon('browser', 18)}</button>
    <p>将不显示轴。</p>
    <div class="lights"><i class="on"></i><i></i><i></i></div>
    <button class="find" aria-label="查找">{@render icon('binoc', 18)}</button>
    <div class="filter">
      <select aria-label="选择过滤器" bind:value={filter}>
        <option>几何</option>
        <option>特征</option>
      </select>
      <i class="arrow"></i>
    </div>
  </footer>

  <footer class="taskbar">
    <button class="start">{@render icon('start', 22)}<em>开始</em></button>
    <button class="launch" aria-label="快速启动">{@render icon('sogou', 18)}</button>
    <span class="lang half">CH</span>
    {#each tasks as task, i}
      <button class="task" class:active={activeTask === i} onclick={() => (activeTask = i)}>
        {@render icon(task.icon)}
        <span class="name">{@render mixed(task.label)}</span>
      </button>
    {/each}
    <div class="tray">
      {@render icon('net')}
      {@render icon('safe')}
      {@render icon('shield')}
      <time>14:28</time>
    </div>
  </footer>

  <div class="watermark">
    <svg width="60" height="58" viewBox="0 0 60 58" aria-hidden="true">
      <path d="M5 20Q-3 2 12 1Q28 2 32 17Q24 4 12 5Q4 7 5 20Z" fill="#8fa3b5" />
      <path d="M30 18Q9 25 12 38Q14 45 27 44Q8 52 9 36Q10 22 30 18Z" fill="#7f97c4" />
      <path d="M5 20Q10 35 30 44" fill="none" stroke="#9ab" stroke-width="2" />
      <path d="M42 15Q60 24 54 39Q46 58 30 52Q46 52 50 38Q54 25 42 15Z" fill="#d0687e" />
      <path d="M54 38Q46 58 30 52Q46 52 50 38Z" fill="#8a5fb4" />
    </svg>
    <strong>野火论坛</strong>
    <span>www.proewildfire.cn</span>
  </div>
</div>

<style>
  :global(body) {
    margin: 0;
    background: #fcfcfc;
  }

  .app {
    position: relative;
    display: flex;
    flex-direction: column;
    min-height: 100vh;
    overflow: hidden;
    font-family: "Liberation Sans", "Noto Sans CJK SC", sans-serif;
    font-size: 12px;
    line-height: 16px;
    color: #333;
    background: #fcfcfc;
  }

  button {
    display: flex;
    align-items: center;
    justify-content: center;
    padding: 0;
    border: none;
    background: none;
    color: inherit;
    font: inherit;
    white-space: nowrap;
  }

  h1,
  h2,
  p,
  ul {
    margin: 0;
    padding: 0;
  }

  .icon {
    flex: none;
    display: block;
    overflow: visible;
  }

  .arrow {
    flex: none;
    border: 3px solid transparent;
    border-top: 4px solid #444;
    border-bottom: none;
  }

  .off {
    color: #aaa;
  }

  .off .arrow {
    border-top-color: #aaa;
  }

  .half {
    font-family: "Liberation Mono", monospace;
    font-size: 10px;
  }

  .name {
    white-space: pre;
  }

  .titlebar {
    display: flex;
    align-items: center;
    height: 32px;
  }

  .quick {
    display: flex;
    align-items: center;
  }

  .logo {
    width: 33px;
    height: 24px;
    padding-left: 8px;
    margin-right: 2px;
    border-right: 1px solid #ccc;
  }

  .tool {
    width: 24px;
    height: 24px;
  }

  .drop {
    width: 14px;
    height: 24px;
  }

  .custom {
    width: 26px;
    border-left: 1px solid #ccc;
  }

  .custom .arrow {
    position: relative;
  }

  .custom .arrow::before {
    content: "";
    position: absolute;
    left: -4px;
    top: -7px;
    width: 8px;
    height: 1px;
    background: #444;
  }

  h1 {
    flex: 1;
    text-align: center;
    font-size: 14px;
    font-weight: bold;
    color: #3a3a3a;
  }

  .controls {
    display: flex;
    padding-right: 4px;
  }

  .controls button {
    width: 27px;
    height: 24px;
  }

  .tabrow {
    display: flex;
    align-items: flex-end;
    height: 30px;
    padding: 0 4px;
    box-sizing: border-box;
    border-bottom: 1px solid #c4c4c8;
    font-family: "Noto Sans CJK SC", sans-serif;
  }

  .file-tab,
  .tab {
    height: 19px;
    border: 1px solid #c4c4c8;
    border-bottom: none;
    background: #eeeff1;
    font-size: 14px;
    font-weight: bold;
    line-height: 16px;
    color: #777;
  }

  .file-tab {
    gap: 4px;
    padding: 0 7px 0 6px;
    margin-right: 8px;
  }

  .file-tab .arrow {
    border-top-color: #777;
  }

  .tabs {
    display: flex;
    align-items: flex-end;
  }

  .tab {
    padding: 0 11px;
    border-left: none;
    border-right-color: #dcdcde;
  }

  .tab:last-child {
    border-right-color: #c4c4c8;
  }

  .tab.active {
    height: 24px;
    margin-bottom: -1px;
    padding: 0 10px;
    border: 1px solid #c4c4c8;
    border-bottom: none;
    background: #fcfcfc;
    color: #222;
  }

  .finder {
    display: flex;
    align-items: center;
    gap: 2px;
    height: 28px;
    margin-left: auto;
  }

  .finder input {
    width: 216px;
    height: 20px;
    box-sizing: border-box;
    margin-left: 2px;
    padding: 0 4px;
    border: 1px solid #bbb;
    background: #fff;
  }

  .go {
    width: 24px;
    height: 27px;
    border: 1px solid #bbb;
    border-bottom: none;
    background: linear-gradient(#fafafa, #dcdee2);
    box-sizing: border-box;
  }

  .learn {
    gap: 8px;
    padding: 0 8px 0 4px;
  }

  .help {
    width: 16px;
    height: 16px;
    border-radius: 50%;
    background: #3b3b3b;
    color: #fff;
    font-family: "Liberation Sans", sans-serif;
    font-weight: bold;
    font-size: 13px;
  }

  .ribbon {
    display: flex;
    margin: 0 4px;
    border-right: 1px solid #ccc;
    border-bottom: 1px solid #c4c4c8;
  }

  .group {
    display: flex;
    flex-direction: column;
    border-left: 1px solid #d4d4d8;
  }

  .rest {
    flex: 1;
  }

  .group-body {
    display: flex;
    gap: 4px;
    height: 75px;
    padding: 2px 4px 0;
  }

  .group-name {
    gap: 6px;
    height: 21px;
    border-top: 1px solid #ccc;
    background: #eeeff1;
  }

  .cmd {
    gap: 3px;
    height: 24px;
    padding-left: 3px;
  }

  .cmd .arrow {
    margin-left: 6px;
  }

  .big {
    flex-direction: column;
    justify-content: flex-start;
    width: 100%;
    padding-top: 4px;
  }

  .big .icon {
    margin-bottom: 7px;
  }

  .big .two {
    width: 24px;
    line-height: 12px;
    margin-top: 2px;
    white-space: normal;
  }

  .work {
    position: relative;
    flex: 1;
    display: flex;
    padding: 13px 9px 11px 4px;
  }

  .side {
    display: flex;
    flex-direction: column;
    width: 216px;
  }

  .side-tabs {
    display: flex;
    position: relative;
    margin-bottom: -1px;
  }

  .side-tabs button {
    width: 30px;
    height: 30px;
    box-sizing: border-box;
    border: 1px solid #ccc;
    border-left-width: 0;
    background: #e9eaed;
  }

  .side-tabs .active {
    border-left-width: 1px;
    border-bottom-color: #fcfcfc;
    background: #fcfcfc;
  }

  .panel {
    flex: 1;
    border: 1px solid #bbb;
    border-right: 3px solid #c4c4c6;
    border-bottom: 2px solid #c4c4c6;
  }

  .panel-head {
    display: flex;
    align-items: center;
    gap: 10px;
    height: 28px;
    padding: 0 4px 0 20px;
    border-bottom: 1px solid #ccc;
  }

  .panel-head h2 {
    flex: 1;
    font-size: 13px;
    font-weight: bold;
  }

  .panel-head button {
    gap: 8px;
  }

  .tree {
    list-style: none;
    font-family: "Noto Sans CJK SC", sans-serif;
  }

  .tree li {
    display: flex;
    align-items: center;
    gap: 3px;
    height: 16px;
    padding-left: 9px;
  }

  .tree .root {
    gap: 4px;
    padding-left: 4px;
  }

  .expander {
    width: 0;
    margin-right: 4px;
    border: 4px solid transparent;
    border-left: 8px solid transparent;
    border-right: none;
  }

  .expander.shown {
    border-left-color: #999;
  }

  .tree .off {
    color: #bbb;
  }

  .canvas {
    flex: 1;
  }

  /* the part sits freely in the view */
  .model {
    position: absolute;
    left: 320px;
    top: 88px;
    width: 520px;
    height: 480px;
  }

  .orb {
    position: absolute;
    right: 0;
    bottom: 16px;
    width: 17px;
    height: 52px;
    overflow: hidden;
    background: #f2f2f2;
  }

  .orb i {
    position: absolute;
    left: 4px;
    top: 8px;
    width: 30px;
    height: 30px;
    border: 2px solid #e4efe4;
    border-radius: 50%;
    background: radial-gradient(circle at 30% 30%, #4fc04f, #0c8a14 60%);
    box-shadow: 0 0 2px #666;
  }

  .view-tools {
    align-self: flex-start;
    width: 30px;
    margin-top: 100px;
    padding: 5px 0 6px;
    border: 1px solid #c8c8cc;
    background: #eeeff1;
  }

  .view-tools button {
    position: relative;
    width: 30px;
    height: 31px;
    box-sizing: border-box;
    border-top: 1px solid #c8c8cc;
    background: #fcfcfc;
  }

  .view-tools button:last-child {
    border-bottom: 1px solid #c8c8cc;
  }

  .view-tools .pressed {
    background: #e9eaec;
    box-shadow: inset 0 0 0 1px #aaa;
  }

  .view-tools .corner::after {
    content: "";
    position: absolute;
    right: 3px;
    bottom: 3px;
    border-left: 4px solid transparent;
    border-bottom: 4px solid #333;
  }

  .view-tools b {
    position: absolute;
    right: 4px;
    top: 4px;
    font-size: 9px;
    font-weight: normal;
    line-height: 9px;
    color: #111;
  }

  .status {
    display: flex;
    align-items: center;
    height: 31px;
    padding: 0 19px 0 5px;
    border-top: 2px solid #9c9c9e;
    background: #eeeff0;
  }

  .square {
    width: 23px;
    height: 23px;
    margin-right: 3px;
    border: 1px solid #c4c4c4;
    background: #fafafa;
    box-sizing: border-box;
  }

  .square.down {
    border-color: #999;
    background: #e4e5e8;
  }

  .status p {
    flex: 1;
    display: flex;
    align-items: center;
    gap: 5px;
    height: 24px;
    margin-left: 8px;
    padding-left: 5px;
    border-left: 1px solid #ddd;
    font-size: 11px;
    color: #555;
  }

  .status p::before {
    content: "";
    width: 5px;
    height: 5px;
    border-radius: 50%;
    background: #1414c8;
  }

  .lights {
    display: flex;
    align-items: center;
    gap: 2px;
    width: 70px;
    height: 24px;
    justify-content: flex-end;
    padding-right: 2px;
    border-left: 1px solid #ddd;
    border-right: 1px solid #ddd;
    box-sizing: border-box;
  }

  .lights i {
    width: 6px;
    height: 6px;
    border-radius: 50%;
    background: #c8cacc;
  }

  .lights .on {
    width: 11px;
    height: 11px;
    background: #3fc646;
  }

  .find {
    width: 40px;
    height: 22px;
    margin: 0 100px 0 2px;
    border: 1px solid #b4b4b8;
    border-radius: 3px;
    background: linear-gradient(#fff, #e2e2e4);
    box-sizing: border-box;
  }

  .filter {
    position: relative;
  }

  .filter select {
    width: 165px;
    height: 19px;
    box-sizing: border-box;
    padding: 0 4px;
    border: 1px solid #aaa;
    appearance: none;
    background: #fafafa;
    color: #111;
    font: inherit;
  }

  .filter .arrow {
    position: absolute;
    right: 4px;
    top: 8px;
  }

  .taskbar {
    display: flex;
    align-items: center;
    height: 30px;
    background: linear-gradient(#3a84ee, #2663e0 15%, #245edb 80%, #1941a5);
    font-family: "Noto Sans CJK SC", sans-serif;
    color: #fff;
  }

  .start {
    gap: 7px;
    width: 97px;
    height: 30px;
    padding-right: 14px;
    border-radius: 0 12px 12px 0;
    background: linear-gradient(#5fae5c, #3b9140 25%, #37873a 75%, #2a6e2c);
    box-shadow: inset -3px 0 4px #23662a;
    box-sizing: border-box;
  }

  .start em {
    font-size: 19px;
    line-height: 24px;
    text-shadow: 1px 1px 1px #1d4d20;
  }

  .launch {
    width: 41px;
    height: 26px;
    margin-left: 4px;
    border: 1px solid #4c82e6;
    box-sizing: border-box;
  }

  .lang {
    margin: 0 6px 0 7px;
  }

  .task {
    justify-content: flex-start;
    gap: 4px;
    width: 158px;
    height: 26px;
    margin-right: 2px;
    padding-left: 10px;
    border-radius: 2px;
    background: linear-gradient(#5a9bff, #3c81f3 20%, #3a7bee);
    box-sizing: border-box;
  }

  .task.active {
    background: #1e4fb6;
    box-shadow: inset 1px 1px 2px #0f2f7c;
  }

  .tray {
    display: flex;
    align-items: center;
    gap: 2px;
    height: 30px;
    margin-left: auto;
    padding: 0 12px 0 9px;
    border-left: 1px solid #123e9c;
    background: linear-gradient(#3bb4f4, #1290e8 15%, #1290e8 80%, #0f6fc4);
    box-sizing: border-box;
  }

  .tray time {
    margin-left: 24px;
    font-size: 12px;
  }

  .watermark {
    position: absolute;
    right: 9px;
    bottom: 5px;
    width: 202px;
    height: 58px;
    background: rgba(255, 255, 255, 0.35);
    pointer-events: none;
  }

  .watermark svg {
    opacity: 0.8;
  }

  .watermark strong {
    position: absolute;
    left: 69px;
    top: 0;
    font-size: 30px;
    line-height: 34px;
    white-space: nowrap;
    color: rgba(92, 178, 124, 0.65);
  }

  .watermark span {
    position: absolute;
    left: 58px;
    top: 34px;
    font-size: 16px;
    line-height: 20px;
    white-space: nowrap;
    color: rgba(72, 132, 190, 0.5);
  }
</style>
